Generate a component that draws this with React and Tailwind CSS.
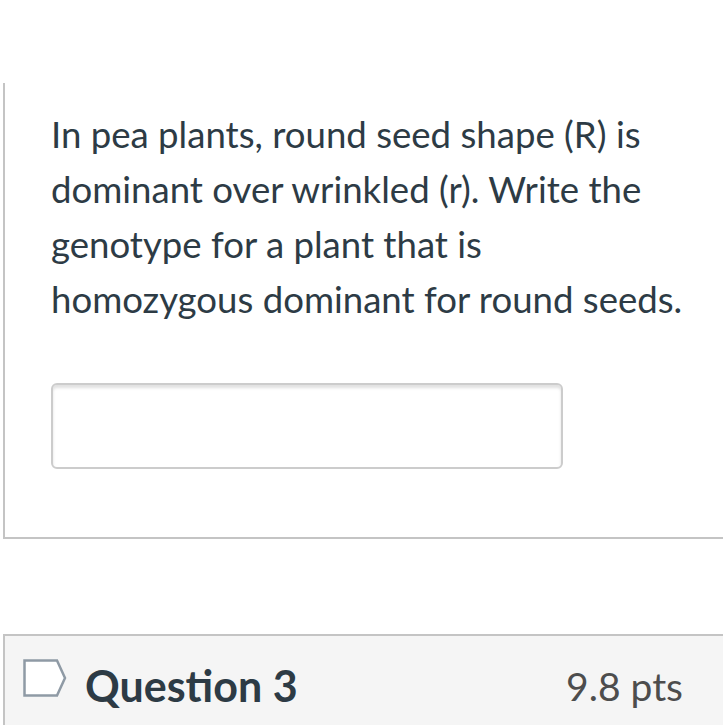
export default function App() {
  return (
    <div className="w-[723px] h-[725px] overflow-hidden bg-white" style={{ fontFamily: 'Lato, "Noto Sans", sans-serif' }}>
      <div className="h-[83px]" />
      <div className="ml-[3px] border-l-2 border-b-2 border-[#c4c4c4] pl-[46px] pt-[24px] pb-[68px]">
        <p className="text-[36.6px] leading-[55px] text-[#2d3b45] whitespace-nowrap">
          In pea plants, round seed shape (R) is
          <br />
          dominant over wrinkled (r). Write the
          <br />
          genotype for a plant that is
          <br />
          homozygous dominant for round seeds.
        </p>
        <div className="mt-[56px] w-[512px] h-[86px] rounded-[6px] border-2 border-[#cccccc] shadow-[inset_0_3px_3px_rgba(0,0,0,0.12)] bg-white" />
      </div>
      <div className="h-[95px]" />
      <div className="ml-[3px] border-l-2 border-t-2 border-[#c4c4c4] bg-[#f5f5f5] h-[120px] flex items-start pt-[22px] pl-[18px] pr-[40px]">
        <svg width="44" height="38" viewBox="0 0 44 38" className="mt-[1px]">
          <path d="M1.5 1.5 H34 L42 19 L34 36.5 H1.5 Z" fill="white" stroke="#8f9aa5" strokeWidth="2.5" strokeLinejoin="miter" />
        </svg>
        <span className="ml-[18px] text-[43px] font-bold leading-[56px] text-[#2d3b45]">Question 3</span>
        <span className="ml-auto text-[39px] leading-[56px] text-[#4d4d4d]">9.8 pts</span>
      </div>
    </div>
  );
}
